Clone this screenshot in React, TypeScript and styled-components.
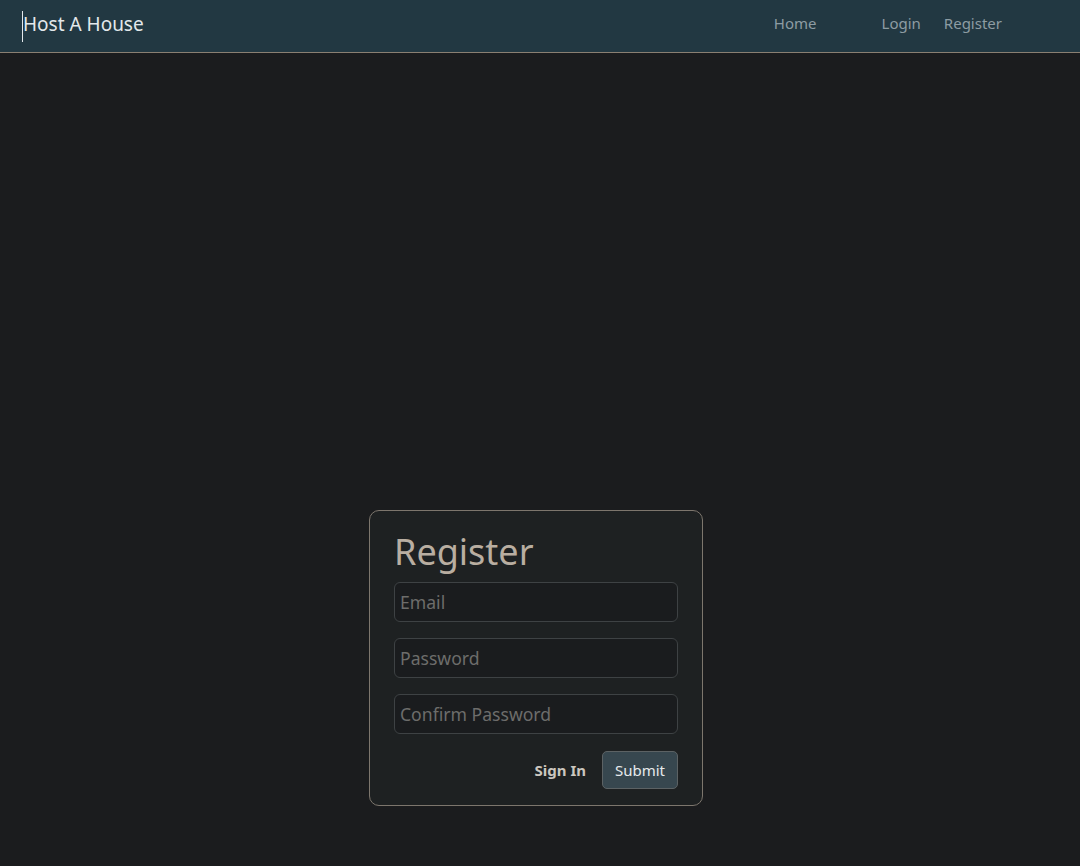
import React from "react";
import styled, { createGlobalStyle } from "styled-components";

const Global = createGlobalStyle`
  html, body { margin: 0; padding: 0; background: #1b1c1e; }
  body { font-family: "Noto Sans", "Open Sans", sans-serif; }
  * { box-sizing: border-box; }
`;

const Page = styled.div`
  min-height: 866px;
  background: #1b1c1e;
  display: flex;
  flex-direction: column;
`;

const NavBar = styled.nav`
  height: 53px;
  background: #223842;
  border-bottom: 1px solid #8a7f72;
  display: flex;
  align-items: center;
  padding: 0 0 0 22px;
`;

const Brand = styled.a`
  color: #e3e8eb;
  font-size: 19px;
  text-decoration: none;
  border-left: 1px solid #e3e8eb;
  line-height: 26px;
  padding-bottom: 5px;
`;

const NavLinks = styled.div`
  margin-left: auto;
  margin-right: 78px;
  display: flex;
  align-items: center;
`;

const NavLink = styled.a<{ $gap?: number }>`
  color: #8d9ca3;
  font-size: 15px;
  text-decoration: none;
  margin-left: ${(p) => p.$gap ?? 0}px;
  padding-bottom: 7px;
`;

const Main = styled.main`
  display: flex;
  justify-content: center;
  padding: 457px 8px 60px 0;
`;

const Card = styled.form`
  width: 334px;
  background: #1e2122;
  border: 1px solid #7d766d;
  border-radius: 10px;
  padding: 18px 24px 16px 24px;
  display: flex;
  flex-direction: column;
`;

const Title = styled.h1`
  margin: 0 0 7px 0;
  font-weight: 400;
  font-size: 36px;
  line-height: 46px;
  color: #b9aea1;
`;

const Input = styled.input`
  width: 284px;
  height: 40px;
  margin-bottom: 16px;
  background: #1a1c1e;
  border: 1px solid #3e4244;
  border-radius: 6px;
  padding: 0 5px;
  font-family: inherit;
  font-size: 17.6px;
  color: #c8c8c8;
  outline: none;
  &::placeholder { color: #6d6d6b; }
`;

const Actions = styled.div`
  display: flex;
  justify-content: flex-end;
  align-items: center;
  gap: 16px;
  margin-top: 1px;
`;

const SignIn = styled.a`
  color: #cbc6bf;
  font-weight: 700;
  font-size: 15px;
  text-decoration: none;
`;

const Submit = styled.button`
  height: 38px;
  width: 76px;
  background: #37474f;
  border: 1px solid #5c6264;
  border-radius: 5px;
  color: #e6eaec;
  font-family: inherit;
  font-size: 15px;
  padding: 0;
`;

export default function App() {
  return (
    <>
      <Global />
      <Page>
        <NavBar>
          <Brand href="#">Host A House</Brand>
          <NavLinks>
            <NavLink href="#">Home</NavLink>
            <NavLink href="#" $gap={65}>Login</NavLink>
            <NavLink href="#" $gap={23}>Register</NavLink>
          </NavLinks>
        </NavBar>
        <Main>
          <Card onSubmit={(e) => e.preventDefault()}>
            <Title>Register</Title>
            <Input type="email" placeholder="Email" />
            <Input type="password" placeholder="Password" />
            <Input type="password" placeholder="Confirm Password" />
            <Actions>
              <SignIn href="#">Sign In</SignIn>
              <Submit type="submit">Submit</Submit>
            </Actions>
          </Card>
        </Main>
      </Page>
    </>
  );
}
